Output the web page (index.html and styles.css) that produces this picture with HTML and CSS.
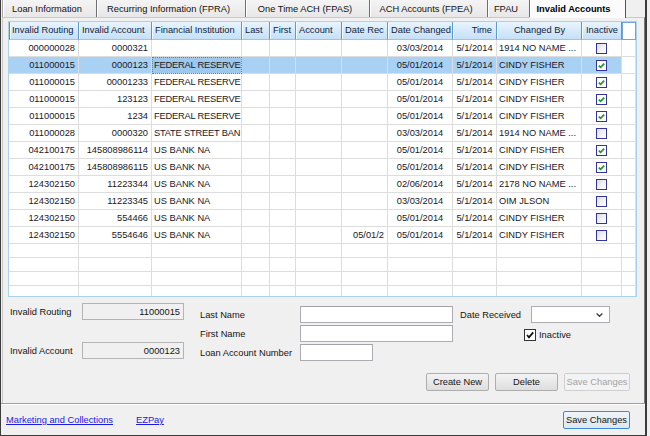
FILE: index.html
```html
<!DOCTYPE html>
<html>
<head>
<meta charset="utf-8">
<link rel="stylesheet" href="styles.css">
</head>
<body>
<div class="window">
  <div class="tabs">
    <div class="tab t1">Loan Information</div>
    <div class="tab t2">Recurring Information (FPRA)</div>
    <div class="tab t3">One Time ACH (FPAS)</div>
    <div class="tab t4">ACH Accounts (FPEA)</div>
    <div class="tab t5">FPAU</div>
    <div class="tab t6 active">Invalid Accounts</div>
  </div>
  <div class="page">
    <div class="gridwrap">
      <div class="row hrow">
        <div class="h first">Invalid Routing</div>
        <div class="h">Invalid Account</div>
        <div class="h">Financial Institution</div>
        <div class="h">Last</div>
        <div class="h">First</div>
        <div class="h">Account</div>
        <div class="h">Date Rec</div>
        <div class="h">Date Changed</div>
        <div class="h r">Time</div>
        <div class="h m">Changed By</div>
        <div class="h m">Inactive</div>
        <div class="h blank"></div>
      </div>

      <div class="row">
        <div class="c r">000000028</div><div class="c r">0000321</div><div class="c"></div><div class="c"></div><div class="c"></div><div class="c"></div><div class="c r"></div><div class="c m">03/03/2014</div><div class="c m">5/1/2014</div><div class="c">1914 NO NAME ...</div><div class="c k"><span class="cb"></span></div><div class="c"></div>
      </div>
      <div class="row sel">
        <div class="c r">011000015</div><div class="c r">0000123</div><div class="c fi focus">FEDERAL RESERVE</div><div class="c"></div><div class="c"></div><div class="c"></div><div class="c r"></div><div class="c m">05/01/2014</div><div class="c m">5/1/2014</div><div class="c">CINDY FISHER</div><div class="c k"><span class="cb on"><svg viewBox="0 0 9 9" width="9" height="9"><path d="M1.8 4.6 L3.6 6.4 L7.2 2.6"/></svg></span></div><div class="c last"></div>
      </div>
      <div class="row">
        <div class="c r">011000015</div><div class="c r">00001233</div><div class="c fi">FEDERAL RESERVE</div><div class="c"></div><div class="c"></div><div class="c"></div><div class="c r"></div><div class="c m">05/01/2014</div><div class="c m">5/1/2014</div><div class="c">CINDY FISHER</div><div class="c k"><span class="cb on"><svg viewBox="0 0 9 9" width="9" height="9"><path d="M1.8 4.6 L3.6 6.4 L7.2 2.6"/></svg></span></div><div class="c"></div>
      </div>
      <div class="row">
        <div class="c r">011000015</div><div class="c r">123123</div><div class="c fi">FEDERAL RESERVE</div><div class="c"></div><div class="c"></div><div class="c"></div><div class="c r"></div><div class="c m">05/01/2014</div><div class="c m">5/1/2014</div><div class="c">CINDY FISHER</div><div class="c k"><span class="cb on"><svg viewBox="0 0 9 9" width="9" height="9"><path d="M1.8 4.6 L3.6 6.4 L7.2 2.6"/></svg></span></div><div class="c"></div>
      </div>
      <div class="row">
        <div class="c r">011000015</div><div class="c r">1234</div><div class="c fi">FEDERAL RESERVE</div><div class="c"></div><div class="c"></div><div class="c"></div><div class="c r"></div><div class="c m">05/01/2014</div><div class="c m">5/1/2014</div><div class="c">CINDY FISHER</div><div class="c k"><span class="cb on"><svg viewBox="0 0 9 9" width="9" height="9"><path d="M1.8 4.6 L3.6 6.4 L7.2 2.6"/></svg></span></div><div class="c"></div>
      </div>
      <div class="row">
        <div class="c r">011000028</div><div class="c r">0000320</div><div class="c fi">STATE STREET BAN</div><div class="c"></div><div class="c"></div><div class="c"></div><div class="c r"></div><div class="c m">03/03/2014</div><div class="c m">5/1/2014</div><div class="c">1914 NO NAME ...</div><div class="c k"><span class="cb"></span></div><div class="c"></div>
      </div>
      <div class="row">
        <div class="c r">042100175</div><div class="c r">145808986114</div><div class="c">US BANK NA</div><div class="c"></div><div class="c"></div><div class="c"></div><div class="c r"></div><div class="c m">05/01/2014</div><div class="c m">5/1/2014</div><div class="c">CINDY FISHER</div><div class="c k"><span class="cb on"><svg viewBox="0 0 9 9" width="9" height="9"><path d="M1.8 4.6 L3.6 6.4 L7.2 2.6"/></svg></span></div><div class="c"></div>
      </div>
      <div class="row">
        <div class="c r">042100175</div><div class="c r">145808986115</div><div class="c">US BANK NA</div><div class="c"></div><div class="c"></div><div class="c"></div><div class="c r"></div><div class="c m">05/01/2014</div><div class="c m">5/1/2014</div><div class="c">CINDY FISHER</div><div class="c k"><span class="cb on"><svg viewBox="0 0 9 9" width="9" height="9"><path d="M1.8 4.6 L3.6 6.4 L7.2 2.6"/></svg></span></div><div class="c"></div>
      </div>
      <div class="row">
        <div class="c r">124302150</div><div class="c r">11223344</div><div class="c">US BANK NA</div><div class="c"></div><div class="c"></div><div class="c"></div><div class="c r"></div><div class="c m">02/06/2014</div><div class="c m">5/1/2014</div><div class="c">2178 NO NAME ...</div><div class="c k"><span class="cb"></span></div><div class="c"></div>
      </div>
      <div class="row">
        <div class="c r">124302150</div><div class="c r">11223345</div><div class="c">US BANK NA</div><div class="c"></div><div class="c"></div><div class="c"></div><div class="c r"></div><div class="c m">03/03/2014</div><div class="c m">5/1/2014</div><div class="c">OIM JLSON</div><div class="c k"><span class="cb"></span></div><div class="c"></div>
      </div>
      <div class="row">
        <div class="c r">124302150</div><div class="c r">554466</div><div class="c">US BANK NA</div><div class="c"></div><div class="c"></div><div class="c"></div><div class="c r"></div><div class="c m">05/01/2014</div><div class="c m">5/1/2014</div><div class="c">CINDY FISHER</div><div class="c k"><span class="cb"></span></div><div class="c"></div>
      </div>
      <div class="row">
        <div class="c r">124302150</div><div class="c r">5554646</div><div class="c">US BANK NA</div><div class="c"></div><div class="c"></div><div class="c"></div><div class="c r">05/01/2</div><div class="c m">05/01/2014</div><div class="c m">5/1/2014</div><div class="c">CINDY FISHER</div><div class="c k"><span class="cb"></span></div><div class="c"></div>
      </div>
      <div class="row empty e14">
        <div class="c"></div><div class="c"></div><div class="c"></div><div class="c"></div><div class="c"></div><div class="c"></div><div class="c"></div><div class="c"></div><div class="c"></div><div class="c"></div><div class="c"></div><div class="c"></div>
      </div>
      <div class="row empty e14">
        <div class="c"></div><div class="c"></div><div class="c"></div><div class="c"></div><div class="c"></div><div class="c"></div><div class="c"></div><div class="c"></div><div class="c"></div><div class="c"></div><div class="c"></div><div class="c"></div>
      </div>
      <div class="row empty e14">
        <div class="c"></div><div class="c"></div><div class="c"></div><div class="c"></div><div class="c"></div><div class="c"></div><div class="c"></div><div class="c"></div><div class="c"></div><div class="c"></div><div class="c"></div><div class="c"></div>
      </div>
      <div class="row empty e10">
        <div class="c"></div><div class="c"></div><div class="c"></div><div class="c"></div><div class="c"></div><div class="c"></div><div class="c"></div><div class="c"></div><div class="c"></div><div class="c"></div><div class="c"></div><div class="c"></div>
      </div>
    </div>

    <div class="form">
      <div class="colA">
        <div class="frow fr1"><span class="lbl la">Invalid Routing</span><input class="tb ro" type="text" value="11000015" readonly></div>
        <div class="frow fr2"><span class="lbl la">Invalid Account</span><input class="tb ro" type="text" value="0000123" readonly></div>
      </div>
      <div class="colB">
        <div class="frow"><span class="lbl lb">Last Name</span><input class="tb wide" type="text"></div>
        <div class="frow"><span class="lbl lb">First Name</span><input class="tb wide" type="text"></div>
        <div class="frow"><span class="lbl lb">Loan Account Number</span><input class="tb short" type="text"></div>
      </div>
      <div class="colC">
        <div class="frow"><span class="lbl lc">Date Received</span><div class="combo"><svg class="chev" viewBox="0 0 7 4" width="7" height="4"><path d="M0.6 0.6 L3.5 3.3 L6.4 0.6"/></svg></div></div>
        <div class="chkrow"><span class="fcb"><svg viewBox="0 0 10 10" width="10" height="10"><path d="M2 5 L4 7.3 L8.2 2.4"/></svg></span><span class="chklbl">Inactive</span></div>
      </div>
    </div>

    <div class="actions">
      <button class="btn b1">Create New</button>
      <button class="btn b2">Delete</button>
      <button class="btn b3" disabled>Save Changes</button>
    </div>
  </div>
  <div class="footer">
    <a class="link l1" href="#">Marketing and Collections</a>
    <a class="link" href="#">EZPay</a>
    <span class="spacer"></span>
    <button class="btn save">Save Changes</button>
  </div>
</div>
</body>
</html>
```

FILE: styles.css
```css
* { box-sizing: border-box; }

html, body {
  margin: 0;
  background: #f0f0f0;
}

body {
  font-family: "Liberation Sans", Arial, sans-serif;
  font-size: 9.3px;
  color: #141414;
}

.window {
  width: 647px;
  height: 436px;
  background: #f0f0f0;
  border-left: 1px solid #3c3c3c;
  border-right: 2px solid #3c3c3c;
  border-bottom: 1px solid #3c3c3c;
  display: flex;
  flex-direction: column;
}

/* ---------- tabs ---------- */
.tabs {
  height: 17px;
  display: flex;
  padding-left: 1px;
  flex: none;
}

.tab {
  height: 17px;
  display: flex;
  align-items: center;
  justify-content: center;
  padding-right: 5px;
  background: linear-gradient(#f4f4f4, #e7e7e7);
  border-right: 1px solid #6f6f6f;
  box-shadow: inset 1px 0 0 #ffffff;
  color: #111;
  white-space: nowrap;
}

.t1 { width: 95px; border-left: 1px solid #a8a8a8; }
.t2 { width: 149px; }
.t3 { width: 124px; }
.t4 { width: 118px; }
.t5 { width: 42px; }
.t6 { width: 96px; }

.tab.active {
  position: relative;
  z-index: 1;
  height: 18px;
  margin-bottom: -1px;
  background: #fbfbfb;
  font-weight: bold;
  color: #000;
  border-right: 1px solid #555;
  padding-right: 8px;
}

/* ---------- page ---------- */
.page {
  flex: none;
  height: 386px;
  margin-left: 1px;
  border: 1px solid #c9c9c9;
  border-bottom: none;
  border-right-color: #7a7a7a;
  padding: 3px 6px 0 5px;
}

.gridwrap {
  width: 629px;
  height: 276px;
  border: 1px solid #a9d3ea;
  background: #fff;
  overflow: hidden;
}

.row {
  display: grid;
  grid-template-columns: 70px 73px 90px 28px 26px 46px 46px 65px 44px 85px 40px 14px;
  height: 17px;
}

.hrow { height: 18px; }

.h {
  background: linear-gradient(#e9f4fd 0%, #d6eafa 50%, #c5e0f6 100%);
  border-right: 1px solid #5d98cf;
  border-bottom: 1px solid #9cc4e6;
  box-shadow: inset 1px 0 0 #f4faff;
  color: #0e1c40;
  line-height: 17px;
  padding: 0 2px 0 3px;
  white-space: nowrap;
  overflow: hidden;
}

.h.first { border-left: 1px solid #4f8fcb; padding-left: 2px; }
.h.r { text-align: right; padding-right: 4px; }
.h.m { text-align: center; }
.h.blank {
  background: #fff;
  border: 1px solid #6fa7dc;
  box-shadow: none;
}

.c {
  background: #fff;
  border-right: 1px solid #dddddd;
  border-bottom: 1px solid #dddddd;
  line-height: 16px;
  padding: 0 2px;
  white-space: nowrap;
  overflow: hidden;
  color: #1c1624;
}

.c.fi { letter-spacing: -0.2px; }
.c.r { text-align: right; padding-right: 3px; }
.c.m { text-align: center; padding: 0; }

.c.k {
  display: flex;
  align-items: center;
  justify-content: center;
}

.sel .c { background: #a9d1f4; }
.sel .c.focus {
  background: #9ec7ec;
  outline: 1px dotted #5f7fa8;
  outline-offset: -1px;
}
.sel .c.last { background: #fff; }

.cb {
  width: 11px;
  height: 11px;
  border: 1px solid #34349a;
  background: linear-gradient(135deg, #dedede 0%, #f2f2f2 55%, #ffffff 100%);
  display: block;
}

.cb.on { background: #fff; }

.cb svg { display: block; }
.cb path {
  fill: none;
  stroke: #1e9a26;
  stroke-width: 1.7;
}

.empty.e14 { height: 14px; }
.empty.e10 { height: 10px; }
.empty.e10 .c { border-bottom: none; }

/* ---------- form ---------- */
.form {
  display: flex;
  height: 70px;
}

.frow {
  display: flex;
  align-items: center;
  height: 17px;
}

.lbl {
  color: #141414;
  white-space: nowrap;
}

.la { width: 74px; padding-left: 2px; }
.lb { width: 100px; }
.lc { width: 71px; }

.colA { width: 176px; }
.fr1 { margin-top: 6px; }
.fr2 { margin-top: 22px; }

.colB {
  margin-left: 16px;
  padding-top: 9px;
  display: flex;
  flex-direction: column;
  gap: 2px;
}

.colC {
  margin-left: 7px;
  padding-top: 9px;
}

.tb {
  height: 17px;
  border: 1px solid #abadb3;
  border-top-color: #a0a2a8;
  background: #fff;
  font: inherit;
  padding: 0 3px;
  margin: 0;
  outline: none;
  color: #141414;
}

.tb.ro {
  width: 102px;
  background: #f0f0f0;
  text-align: right;
  border-color: #b4b4b4;
}

.tb.wide { width: 153px; }
.tb.short { width: 73px; }

.combo {
  width: 79px;
  height: 17px;
  border: 1px solid #abadb3;
  background: #fff;
  display: flex;
  align-items: center;
  justify-content: flex-end;
  padding-right: 6px;
}

.chev path {
  fill: none;
  stroke: #3a3a3a;
  stroke-width: 1.3;
}

.chkrow {
  display: flex;
  align-items: center;
  margin-top: 6px;
  padding-left: 64px;
  height: 12px;
}

.fcb {
  width: 12px;
  height: 12px;
  border: 1px solid #333;
  background: #fff;
  display: flex;
  align-items: center;
  justify-content: center;
}

.fcb path {
  fill: none;
  stroke: #111;
  stroke-width: 1.8;
}

.chklbl { margin-left: 3px; }

/* ---------- buttons ---------- */
.actions {
  display: flex;
  justify-content: flex-end;
  gap: 6px;
  margin-top: 6px;
  padding-right: 8px;
}

.btn {
  height: 18px;
  font: inherit;
  color: #141414;
  border: 1px solid #adadad;
  border-radius: 2px;
  background: linear-gradient(#f3f3f3, #dedede);
  padding: 0;
  margin: 0;
}

.b1, .b2 { width: 63px; }
.b3 {
  width: 66px;
  color: #a3a3a3;
  border-color: #cfcfcf;
  background: #f3f3f3;
}

/* ---------- footer ---------- */
.footer {
  flex: 1;
  border-top: 1px solid #a0a0a0;
  box-shadow: inset 0 1px 0 #ffffff;
  display: flex;
  align-items: center;
  padding: 1px 15px 0 5px;
}

.link {
  color: #1a1ae0;
  text-decoration: underline;
  white-space: nowrap;
}

.l1 { width: 130px; }

.spacer { flex: 1; }

.btn.save {
  width: 67px;
  border-color: #3e8ad6;
  background: linear-gradient(#eef5fb, #dde7f0);
}
```
